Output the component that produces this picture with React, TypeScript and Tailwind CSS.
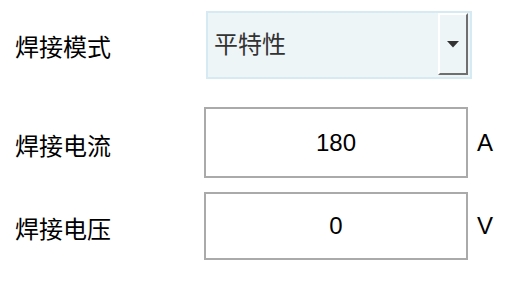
import React from 'react'

const font = { fontFamily: '"Liberation Sans", "Noto Sans CJK SC", sans-serif' }

function ValueRow({ label, value, unit, h }: { label: string; value: string; unit: string; h: string }) {
  return (
    <div className="flex items-center">
      <div className="w-[204px] shrink-0 pl-[15px] pt-[8px] text-[24px] leading-none text-black">{label}</div>
      <div className={`flex w-[264px] items-center justify-center border-2 border-[#aaaaaa] bg-white text-[24px] text-black ${h}`}>
        {value}
      </div>
      <div className="ml-[9px] text-[24px] text-black">{unit}</div>
    </div>
  )
}

export default function App() {
  return (
    <div className="h-[282px] w-[512px] overflow-hidden bg-white pt-[11px]" style={font}>
      <div className="flex items-center">
        <div className="w-[206px] shrink-0 pl-[15px] pt-[6px] text-[24px] leading-none text-black">焊接模式</div>
        <div className="flex h-[68px] w-[266px] items-start border-2 border-[#d6eaf4] bg-[#edf5f7]">
          <div className="flex-1 self-center pl-[6px] text-[24px] text-[#333333]">平特性</div>
          <div className="mr-[2px] flex h-[62px] w-[30px] items-center justify-center border-2 border-t-white border-l-white border-r-[#6f6f6f] border-b-[#6f6f6f] bg-[#edf5f7]">
            <svg width="14" height="8" viewBox="0 0 14 8">
              <path d="M1 1 H13 L7 7.5 Z" fill="#333333" />
            </svg>
          </div>
        </div>
      </div>
      <div className="mt-[28px] flex flex-col gap-[14px]">
        <ValueRow label="焊接电流" value="180" unit="A" h="h-[71px]" />
        <ValueRow label="焊接电压" value="0" unit="V" h="h-[68px]" />
      </div>
    </div>
  )
}
